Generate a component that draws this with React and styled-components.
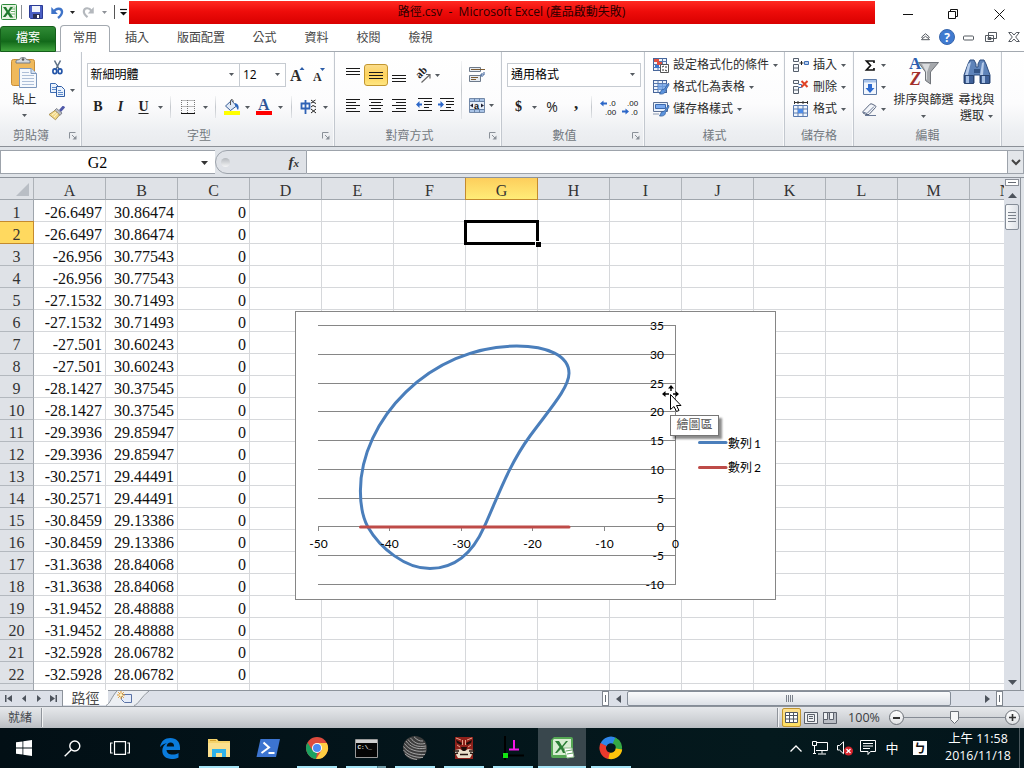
import React from "react";
import styled, { createGlobalStyle, css } from "styled-components";

const ui = `"Open Sans", "Noto Sans CJK TC", sans-serif`;
const serif = `"Liberation Serif", "Noto Sans CJK TC", serif`;

const Global = createGlobalStyle`
  *, *::after { box-sizing: border-box; }
  body { margin: 0; overflow: hidden; background: #fff; }
  svg { display: block; flex: none; overflow: visible; }
`;

const Window = styled.div`
  width: 1024px; height: 768px; overflow: hidden;
  display: flex; flex-direction: column;
  font: 12px/16px ${ui}; color: #2a2a2a; white-space: nowrap;
`;

/* ---------- title bar ---------- */
const TitleBar = styled.header`
  height: 25px; flex: none; display: flex; align-items: flex-start; background: #fff;
`;
const Quick = styled.div`
  width: 129px; height: 24px; flex: none; display: grid; align-items: center;
  grid-template-columns: 18px 6px 24px 19px 11px 20px 13px 6px 12px;
  justify-items: center;
`;
const QuickSep = styled.i`width: 1px; height: 14px; background: ${(p) => p.$c || "#8a8f96"};`;
const TitleText = styled.div`
  width: 746px; height: 23px; margin-top: 1px; flex: none;
  background: linear-gradient(#ff2a22, #ee0c0a 45%, #d90000);
  color: #2c0000; text-align: center; line-height: 22px;
  padding-left: 19px; font-size: 12px; white-space: pre;
`;
const WinButtons = styled.div`
  flex: 1; height: 25px; display: grid; grid-template-columns: 20px 46px 44px 1fr;
  align-items: center; margin-top: 2px;
  & > svg:nth-child(1) { grid-column: 2; margin-left: 8px; }
  & > svg:nth-child(2) { margin-left: 7px; }
  & > svg:nth-child(3) { margin-left: 9px; }
`;

/* ---------- tabs ---------- */
const TabRow = styled.nav`
  height: 27px; flex: none; display: flex; align-items: flex-end;
  border-bottom: 1px solid #a3a9b0; background: #fff;
`;
const FileTab = styled.div`
  width: 56px; height: 26px; border-radius: 3px 3px 0 0; margin-right: 4px; margin-bottom: -1px;
  background: linear-gradient(#2f8a35, #1b7422 45%, #12691a 60%, #3fa33c);
  border: 1px solid #155f1b; color: #fff; text-align: center; line-height: 22px;
`;
const ActiveTab = styled.div`
  width: 50px; height: 27px; margin-bottom: -1px; border: 1px solid #a3a9b0; border-bottom: 0;
  border-radius: 4px 4px 0 0; background: #fff; text-align: center; line-height: 24px; color: #444;
`;
const Tab = styled.div`width: ${(p) => p.$w}px; text-align: center; line-height: 16px; padding-bottom: 5px; color: #444;`;
const TabTools = styled.div`
  margin-left: auto; height: 26px; display: grid; align-items: center; justify-items: center; padding-bottom: 2px;
  grid-template-columns: 12px 32px 11px 34px 11px; padding-right: 5px;
`;

/* ---------- ribbon ---------- */
const Ribbon = styled.section`
  height: 95px; flex: none; display: flex; border-bottom: 1px solid #8b9097;
  background: linear-gradient(#ffffff, #fcfcfd 55%, #edeff2 85%, #e9ebee);
`;
const Group = styled.div`
  width: ${(p) => p.$w}px; height: 94px; flex: none; display: flex; flex-direction: column;
  border-right: 1px solid #c3c8cf; box-shadow: inset -1px 0 #f9fafb;
`;
const GroupBody = styled.div`height: 76px; display: flex; padding-left: ${(p) => p.$pl || 0}px;`;
const GroupFoot = styled.div`
  height: 16px; display: grid; grid-template-columns: 1fr auto 1fr; align-items: center; color: #737980;
  svg { justify-self: end; margin-right: 4px; }
  span { padding-left: ${(p) => p.$dl || 0}px; padding-right: ${(p) => p.$dr || 0}px; }
`;
const Stack = styled.div`display: flex; flex-direction: column; width: ${(p) => (p.$w ? p.$w + "px" : "auto")}; padding-top: ${(p) => p.$pt || 0}px;`;
const Tools = styled.div`
  height: ${(p) => p.$h || 22}px; margin-top: ${(p) => p.$mt || 0}px;
  display: grid; grid-template-columns: ${(p) => p.$cols}; align-items: center; justify-items: center; justify-content: start;
`;
const BigButton = styled.div`
  width: ${(p) => p.$w}px; display: flex; flex-direction: column; align-items: center; padding-top: ${(p) => p.$pt || 5}px;
`;
const Caption = styled.span`line-height: 16px; display: flex; align-items: center; gap: 4px; height: 16px; margin-top: ${(p) => p.$mt || 0}px;`;
const Line = styled.div`
  height: 22px; display: flex; align-items: center;
  svg:first-child { margin-right: 4px; }
  span { margin-right: 4px; }
`;
const Combo = styled.div`
  width: ${(p) => p.$w}px; height: 24px; border: 1px solid #c6cbd1; background: #fff; color: #000;
  display: flex; align-items: center; justify-content: space-between; padding: 0 5px 1px 3px; line-height: 20px;
`;
const Divider = styled.i`width: 1px; height: ${(p) => p.$h || 22}px; background: linear-gradient(#f3f4f5, #c3c7cc 50%, #e3e5e8);`;
const Glyph = styled.b`
  font: bold ${(p) => p.$s || 14}px/18px "Liberation Serif", serif; color: #222; margin-top: ${(p) => p.$mt || 0}px;
  ${(p) => p.$i && css`font-style: italic;`}
  ${(p) => p.$u && css`text-decoration: underline; text-underline-offset: 2px;`}
`;
const PercentGlyph = styled.span`font-size: 14px; color: #222;`;
const Pressed = styled.div`
  width: 24px; height: 22px; border: 1px solid #c2962f; border-radius: 3px;
  background: linear-gradient(#fbdc8a, #fdd25c 50%, #ffe680); display: grid; place-items: center;
`;
const Lift = styled.div`padding-bottom: ${(p) => p.$b || 0}px; padding-top: ${(p) => p.$t || 0}px;`;

/* ---------- formula bar ---------- */
const FormulaBar = styled.section`
  height: 31px; flex: none; padding-top: 3px; background: #dfe3e8; border-bottom: 1px solid #8d939b;
  display: flex; align-items: flex-start;
`;
const NameBox = styled.div`
  width: 215px; height: 24px; border: 1px solid #9da3ab; border-right: 0; background: #fff; color: #000;
  display: grid; grid-template-columns: 193px 1fr; align-items: center; justify-items: center;
  font: 16px/24px ${serif};
`;
const FxBox = styled.div`
  width: 92px; height: 24px; border: 1px solid #9da3ab; border-radius: 12px 0 0 12px; background: #dfe2e7;
  display: flex; align-items: center; justify-content: space-between; padding: 0 7px 0 5px;
  em { font: italic bold 15px/18px "Liberation Serif", serif; color: #333; }
  small { font-size: 11px; }
`;
const Knob = styled.i`width: 9px; height: 9px; border-radius: 50%; background: linear-gradient(#b5b9be, #f4f5f6);`;
const Input = styled.div`flex: 1; height: 24px; border: solid #9da3ab; border-width: 1px 0; background: #fff;`;
const Expand = styled.div`
  width: 17px; height: 24px; border: 1px solid #9da3ab; background: #e3e6ea; display: grid; place-items: center;
`;

/* ---------- sheet ---------- */
const Sheet = styled.main`height: 512px; flex: none; display: flex; position: relative; background: #dfe3e8;`;
const Grid = styled.div`
  width: 1004px; height: 512px; overflow: hidden; display: grid; align-content: start;
  grid-template-columns: 34px repeat(14, 72px); grid-auto-rows: 22px; background: #fff;
  font: 16px/25px ${serif};
`;
const Head = styled.div`
  border-right: 1px solid #adb2b8; border-bottom: 1px solid #9fa5ac; background: #dfe2e7; color: #333;
  text-align: center;
  ${(p) => p.$on && css`background: linear-gradient(#fdce5c, #ffec78); border-color: #c48a2e; box-shadow: -1px 0 #c48a2e;`}
`;
const RowHead = styled(Head)`
  border-bottom-color: #b3b8be; border-right-color: #9fa5ac;
  ${(p) => p.$on && css`background: #ffd95f; border-color: #c48a2e; box-shadow: 0 -1px #c48a2e;`}
`;
const Corner = styled(Head)`display: flex; align-items: flex-end; justify-content: flex-end; padding: 0 4px 3px 0;`;
const Cell = styled.div`
  border-right: 1px solid #d6d8db; border-bottom: 1px solid #d6d8db; text-align: right; padding-right: 3px;
  color: #111; position: relative;
`;
const Selection = styled.div`
  position: absolute; z-index: 1; left: -2px; top: -2px; width: 75px; height: 25px; border: 3px solid #000;
  &::after { content: ""; position: absolute; right: -5px; bottom: -5px; width: 6px; height: 6px; background: #000; border: solid #fff; border-width: 1px 0 0 1px; }
`;
const VScroll = styled.div`
  width: 17px; height: 512px; background: #dce0e7; border-right: 1px solid #8d939b;
  display: flex; flex-direction: column; align-items: center;
`;
const SplitBox = styled.div`
  width: 14px; height: 7px; margin-top: 1px; border: 1px solid #8a8f98; background: #fff; display: grid; place-items: center;
  i { width: 8px; height: 1px; background: #666c75; }
`;
const Arrow = styled.div`
  height: ${(p) => p.$h}px; width: ${(p) => (p.$w ? p.$w + "px" : "auto")}; padding-left: ${(p) => p.$pl || 0}px;
  display: grid; place-items: center; ${(p) => p.$end && css`margin-top: auto;`}
`;
const VThumb = styled.div`
  width: 14px; height: 26px; border: 1px solid #858d98; border-radius: 2px; background: linear-gradient(90deg, #fafbfc, #dde1e7);
  display: grid; place-content: center; gap: 2px;
  i { width: 8px; height: 1px; background: #7a818b; }
`;
const ChartFrame = styled.div`
  position: absolute; left: 295px; top: 133px; width: 481px; height: 289px; background: #fff; border: 1px solid #868686;
`;
const Tip = styled.div`
  position: absolute; left: 670px; top: 237px; width: 49px; height: 21px; border: 1px solid #767676; background: #fff;
  box-shadow: 3px 3px 2px rgba(0,0,0,.45); color: #575757; text-align: center; line-height: 18px;
`;
const Pointer = styled.div`position: absolute; left: 662px; top: 207px;`;

/* ---------- sheet tabs ---------- */
const SheetTabs = styled.section`
  height: 17px; flex: none; display: flex; background: #dce0e8; border-top: 1px solid #8d939b; border-bottom: 1px solid #8d939b;
  & > svg { margin-left: -4px; }
`;
const NavButtons = styled.div`
  width: 63px; display: grid; grid-template-columns: repeat(4, 15px); align-items: center; justify-items: center;
  padding-left: 1px; border-right: 1px solid #8d939b;
`;
const SheetName = styled.div`width: 45px; height: 15px; margin-top: -1px; background: #fff; text-align: center; font-size: 14px; line-height: 15px; color: #4a4a4a;`;
const HBar = styled.div`margin-left: auto; width: 422px; height: 15px; display: flex; align-items: center;`;
const SplitV = styled.div`width: 7px; height: 15px; border: 1px solid #80868f; background: #fff; display: grid; place-items: center; i { width: 1px; height: 7px; background: #666c75; }`;
const HThumb = styled.div`
  width: 324px; height: 15px; border: 1px solid #858d98; border-radius: 2px; background: linear-gradient(#fafbfc, #dde1e7);
  display: flex; justify-content: center; align-items: center; gap: 1px;
  i { width: 1px; height: 7px; background: #7a818b; }
`;

/* ---------- status bar ---------- */
const Status = styled.footer`
  height: 21px; flex: none; display: flex; align-items: center; padding: 0 4px 0 8px; color: #43474c;
  background: linear-gradient(#e6e8eb, #cfd2d6 60%, #b9bdc2);
`;
const StatusSep = styled.i`
  width: 2px; height: 19px; background: linear-gradient(90deg, #8f949b 50%, #f2f3f4 50%); margin-left: 9px;
  ${(p) => p.$push && css`margin-left: auto; margin-right: 3px;`}
`;
const View = styled.div`
  width: 19px; height: 19px; display: grid; place-items: center; border-radius: 2px;
  ${(p) => p.$on && css`border: 1px solid #c2962f; background: linear-gradient(#fddf8f, #ffe05f);`}
`;
const Percent = styled.span`width: 50px; text-align: center; font-size: 12.5px; color: #3a3d42;`;
const Zoom = styled.div`width: 131px; display: flex; align-items: center;`;
const Round = styled.div`width: 15px; height: 15px; border: 1px solid #6a6f76; border-radius: 50%; background: linear-gradient(#fff, #dfe1e4); display: grid; place-items: center; flex: none;`;
const Track = styled.div`flex: 1; height: 1px; background: #858b94; display: flex; justify-content: center; align-items: center;`;

/* ---------- taskbar ---------- */
const Taskbar = styled.footer`height: 40px; flex: none; display: flex; background: linear-gradient(90deg, #020f15, #03141a 35%, #04191d 75%, #03151b); color: #fff;`;
const Task = styled.div`
  width: 48px; height: 40px; margin-right: ${(p) => p.$mr || 0}px; display: grid; place-items: center; position: relative;
  ${(p) => p.$active && css`background: #39474d;`}
  ${(p) => (p.$run || p.$active) && css`
    &::after { content: ""; position: absolute; bottom: 0; height: 2px; left: ${p.$active ? 0 : 4}px; right: ${p.$active ? 0 : 4}px;
      background: ${p.$multi ? "linear-gradient(90deg, #a5e4f6 31px, #4c7f8c 31px, #4c7f8c 32px, #6f9ba7 32px)" : "#a5e4f6"}; }`}
`;
const Tray = styled.div`
  margin-left: auto; width: 234px; display: grid; align-items: center; justify-items: center;
  grid-template-columns: 12px 36px 14px 32px 16px 40px 76px 1fr;
`;
const Clock = styled.div`text-align: center; font-size: 12.4px; line-height: 17px; height: 36px; span { display: block; }`;
const Edge = styled.i`width: 1px; height: 40px; background: #4b585e; justify-self: end; margin-right: 4px;`;
const Han = styled.span`font-size: 13px; line-height: 18px;`;
const Ime = styled.span`width: 14px; height: 14px; background: #fff; color: #111; font: bold 12px/13px "Noto Sans CJK TC", sans-serif; text-align: center;`;

/* ---------- drawings ---------- */
const Down = ({ c = "#555a60", w = 5 }) => (
  <svg width={w} height={(w + 1) / 2} viewBox={`0 0 ${w} ${(w + 1) / 2}`}><path d={`M0 0H${w}L${w / 2} ${(w + 1) / 2}z`} fill={c} /></svg>
);
const Launcher = () => (
  <svg width="8" height="8" viewBox="0 0 8 8" fill="none" stroke="#8a9098"><path d="M.5 6.500V.5H6.500M3 3l3 3" /><path d="M7.500 3.500v4h-4z" fill="#8a9098" stroke="none" /></svg>
);
const ExcelLogo = () => (
  <svg width="16" height="16" viewBox="0 0 16 16">
    <rect x=".5" y=".5" width="15" height="15" rx="1" fill="#e8f4e3" stroke="#2d8a3c" />
    <path d="M9 3h5v10H9z" fill="#fff" stroke="#8fc48f" strokeWidth=".6" />
    <path d="M10 5h4M10 7.500h4M10 10h4" stroke="#6bb26b" />
    <path d="M2 3h3l2 3.500L9.500 3H12L8.300 8l4 5.500H9L6.800 10 4.500 13H1.800L5.500 8z" fill="#1f7a2e" />
  </svg>
);
const Save = () => (
  <svg width="14" height="14" viewBox="0 0 14 14"><path d="M.5.5h13v13h-12l-1-1z" fill="#4a5fc4" stroke="#2b3b95" /><path d="M3 1h8v6H3z" fill="#f2f5fb" /><path d="M4 9h7v4.500H4z" fill="#2b3156" /><path d="M8 10h2v3H8z" fill="#fff" /></svg>
);
const Undo = () => (
  <svg width="13" height="13" viewBox="0 0 13 13" fill="none"><path d="M3 5.500C5 2 10.500 1.500 11 5.500 11.300 8 9.500 10 7 12" stroke="#3e73c8" strokeWidth="2.400" /><path d="M.3 1v7h6.500z" fill="#3e73c8" /></svg>
);
const Redo = () => (
  <svg width="12" height="12" viewBox="0 0 13 13" fill="none"><path d="M10 5C8 1.500 2.500 1.500 2 5.500 1.800 8 3.500 10 6 12" stroke="#b4b8bd" strokeWidth="2.400" /><path d="M12.700 1v7H6.200z" fill="#b4b8bd" /></svg>
);
const Paste = () => (
  <svg width="27" height="31" viewBox="0 0 27 31">
    <rect x=".5" y="2.500" width="23" height="26" rx="2" fill="#efb95c" stroke="#c98e36" />
    <path d="M5 6V4c0-1 2-1 3.500-1.500C9 0 15 0 15.500 2.500 17 3 19 3 19 4v2z" fill="#d5d9de" stroke="#767c84" /><circle cx="12" cy="2.500" r="1.200" fill="#555" />
    <path d="M8.500 11.500H20l5.500 5V30.500h-17z" fill="#f6f9fd" stroke="#7e98bd" /><path d="M20 11.500v5h5.500" fill="#d3e0f1" stroke="#7e98bd" />
    <path d="M11 15.500h7M11 18.500h12M11 21.500h12M11 24.500h12M11 27.500h12" stroke="#aebfd8" />
  </svg>
);
const Scissors = () => (
  <svg width="11" height="15" viewBox="0 0 11 15" fill="none"><path d="M2.500.5L7 9M8.500.5L4 9" stroke="#5e7187" strokeWidth="1.600" /><ellipse cx="2.800" cy="11.200" rx="1.900" ry="2.400" stroke="#2455a8" strokeWidth="1.700" /><ellipse cx="8" cy="11.200" rx="1.900" ry="2.400" stroke="#2455a8" strokeWidth="1.700" /></svg>
);
const Copy = () => (
  <svg width="15" height="14" viewBox="0 0 15 14"><path d="M.5.500h5l2.500 2.500v6.500H.5z" fill="#eaf2fc" stroke="#3e6db2" /><path d="M2 4.500h4M2 6.500h4" stroke="#5f8ccc" /><path d="M6.500 3.500h5l3 3v7h-8z" fill="#eaf2fc" stroke="#2f5ca5" /><path d="M8 7.500h3M8 9.500h5M8 11.500h5" stroke="#5f8ccc" /></svg>
);
const Brush = () => (
  <svg width="16" height="14" viewBox="0 0 16 14"><path d="M10 4l3.500-4q2-.5 2.500 1.500L12 6z" fill="#4f58a8" /><path d="M7.500 2.500l5.500 4.500-2 2.500-5.500-5z" fill="#b9bcc6" stroke="#5f636d" strokeWidth=".7" /><path d="M6 4.500L0 8.500 6.500 13.800 10.500 9z" fill="#f3d988" stroke="#a08545" strokeWidth=".8" /><path d="M3 9l4-3M5 11l3.500-4" stroke="#fff5cf" /></svg>
);
const FontStep = ({ up }) => (
  <svg width={up ? 14 : 12} height="16" viewBox={`0 0 ${up ? 14 : 12} 16`}>
    <text x="0" y="14" fontFamily="Liberation Serif" fontWeight="bold" fontSize={up ? 16 : 12} fill="#2c2c2c">A</text>
    <path d={up ? "M9.500 3h5L12 0z" : "M7 1h5L9.500 4z"} fill="#2c5da8" />
  </svg>
);
const Borders = () => (
  <svg width="14" height="14" viewBox="0 0 14 14"><path d="M.5.5h13M.5 6.500h13M.5 0v13M6.500 0v13M13.500 0v13" fill="none" stroke="#777" strokeDasharray="1 1" /><path d="M0 13.500h14" stroke="#111" /></svg>
);
const Bucket = () => (
  <svg width="16" height="16" viewBox="0 0 16 16"><path d="M1.500 7L7.500 1.500l5 5.500-6 4.500z" fill="#dfe9f7" stroke="#3a5f97" /><path d="M6.500 6V1.500C7.500-.5 9.500.5 9 3" fill="none" stroke="#555" /><path d="M11 4c3.500 1 4.500 4 3 7-1.500-1-1-3.500-3-4.500z" fill="#2b66bd" /><path d="M0 12h16v4H0z" fill="#ffff00" /></svg>
);
const FontColor = () => (
  <svg width="16" height="16" viewBox="0 0 16 16"><text x="2" y="11" fontFamily="Liberation Serif" fontWeight="bold" fontSize="16" fill="#2f5597">A</text><path d="M0 12h16v4H0z" fill="#ff0000" /></svg>
);
const Phonetic = () => (
  <svg width="17" height="16" viewBox="0 0 17 16"><path d="M1.500 4.500h8v5h-8zM5.500 1v14" fill="none" stroke="#2f62b5" strokeWidth="1.800" /><path d="M11 1l2 1.500L15.500 1M11 4l2-1 3 1.500M11 8l2-1.500L16 8M11 10l5 4M16 10l-5 4" fill="none" stroke="#222" /></svg>
);
const Bars = ({ kind = "left" }) => (
  <svg width="14" height="13" viewBox="0 0 14 13" stroke="#1a1a1a">
    {[0, 1, 2, 3, 4].map((i) => {
      const short = i % 2 === 1;
      const a = !short || kind === "left" ? 0 : kind === "right" ? 4 : 2;
      const b = !short || kind === "right" ? 14 : kind === "left" ? 10 : 12;
      return <path key={i} d={`M${a} ${0.5 + i * 3}H${b}`} />;
    })}
  </svg>
);
const ThreeBars = () => (
  <svg width="14" height="7" viewBox="0 0 14 7" stroke="#1a1a1a"><path d="M0 .5h14M0 3.500h14M0 6.500h14" /></svg>
);
const Rotate = () => (
  <svg width="16" height="15" viewBox="0 0 16 15"><text x="0" y="0" fontFamily="Liberation Serif" fontWeight="bold" fontSize="11" transform="translate(4.500 11) rotate(-45)" fill="#222">ab</text><path d="M6.500 14.500L14.500 7M11 6.500h4v4" fill="none" stroke="#666" strokeWidth="1.200" /></svg>
);
const Indent = ({ out }) => (
  <svg width="16" height="14" viewBox="0 0 16 14"><path d="M2 .5h14M2 12.500h14M8 3.500h8M8 9.500h5M8 6.500h8" stroke="#1a1a1a" strokeWidth="1.200" /><path d={out ? "M0 6.500L3.500 3v2.500H6v2H3.500V10z" : "M6 6.500L2.500 3v2.500H0v2h2.500V10z"} fill="#2b66c8" /></svg>
);
const Wrap = () => (
  <svg width="16" height="16" viewBox="0 0 16 16"><path d="M.5.5h11v4H.5zM.5 8.500h11v6H.5z" fill="#e6ebf1" stroke="#6d7a8b" /><path d="M2 2.500h14M2 10.500h7M2 12.500h5" stroke="#7b5b33" /><path d="M15 5v3h-3M13.500 6l-2 2 2 2" fill="none" stroke="#345a95" /></svg>
);
const Merge = () => (
  <svg width="16" height="15" viewBox="0 0 16 15"><path d="M.5.5h15v14H.5z" fill="#a9c3e6" stroke="#7389a8" /><path d="M0 3.500h16M0 11.500h16M5.500 0v4M10.500 0v4M5.500 11v4M10.500 11v4" stroke="#6a84a8" /><path d="M1 4h14v7H1z" fill="#e8f0fa" /><text x="5" y="10.500" fontFamily="Liberation Sans" fontWeight="bold" fontSize="9" fill="#111">a</text><path d="M4 5.500v4L1 7.500zM12 5.500v4l3-2z" fill="#223" /></svg>
);
const Decimal = ({ more }) => (
  <svg width="17" height="15" viewBox="0 0 17 15" fontFamily="Liberation Sans" fontSize="8">
    <text x={more ? 9 : 5} y="6" fill="#111">{more ? ".0" : ".00"}</text><text x={more ? 5 : 9} y="14.500" fill="#111">{more ? ".00" : ".0"}</text>
    <path d={more ? "M0 3.500L3.500.5v2H7v2H3.500v2z" : "M7 11.500L3.500 8.500v2H0v2h3.500v2z"} fill="#2b66c8" />
  </svg>
);
const Table = ({ children }) => (
  <svg width="16" height="16" viewBox="0 0 16 16"><rect x=".5" y="1.500" width="13" height="12" fill="#eef4fc" stroke="#46659a" /><path d="M.5 4.500h13M.5 7.500h13M.5 10.500h13M5 1.500v12M9.500 1.500v12" stroke="#5778ae" />{children}</svg>
);
const brushMark = <path d="M15.500 4l-4 6-3 1-2 4c4 .5 6-1 6-3.500L16 6z" fill="#5b93dd" stroke="#2b5797" strokeWidth=".7" />;
const Conditional = () => <Table><path d="M1 2h5v3H1zM4 5h5v3H4z" fill="#e2503f" /><path d="M2 8h4v3H2z" fill="#3d78cc" /><path d="M7.500 7.500h8v8h-8z" fill="#fff" stroke="#555" /><path d="M9 10l2-1M9 13h2M12 10h2M12 13l2 1" stroke="#333" /></Table>;
const TableFmt = () => <Table><path d="M5 5h9v6H5z" fill="#6ea0e3" opacity=".8" />{brushMark}</Table>;
const CellStyle = () => (
  <svg width="16" height="16" viewBox="0 0 16 16"><path d="M.5 1.500h14v9H.5z" fill="#e8f0fb" stroke="#5d7196" /><path d="M2.500 3.500h10v4h-10z" fill="#7aaaf0" stroke="#3d69ad" /><path d="M0 13h6" stroke="#8b9ab2" />{brushMark}</svg>
);
const InsertCell = ({ del }) => (
  <svg width="16" height="15" viewBox="0 0 16 15" fill="#f5f8fc" stroke="#555e6b"><path d="M.5.5h5v3h-5zM.5 6.500h5v7h-5zM.5 10h5" />{del ? <><path d="M5.500 4.500h3v3h-3" stroke="#3f6fb5" /><path d="M8.500 1l6 6M14.500 1l-6 6" stroke="#e04326" strokeWidth="2" /></> : <><path d="M11.500 3.500h4v3h-4z" fill="#b9d0f0" stroke="#3f6fb5" /><path d="M6.500 5h4M8.500 3v4" stroke="#222" /></>}</svg>
);
const FormatCell = () => (
  <svg width="16" height="16" viewBox="0 0 16 16"><path d="M1 1.500h14M1.500 0v3M14.500 0v3M5 0v3M10 0v3" stroke="#333" /><path d="M.5 4.500h14v11H.5z" fill="#eef4fc" stroke="#5778ae" /><path d="M.5 8h14M.5 12h14M5 4.500v11M10 4.500v11" stroke="#5778ae" /><path d="M5 8h5v4H5z" fill="#4c8be8" /></svg>
);
const Sigma = () => <svg width="10" height="11" viewBox="0 0 10 11"><path d="M9 3V1H1.500L5.500 5.500 1.500 10H9V8" fill="none" stroke="#111" strokeWidth="1.700" /></svg>;
const Fill = () => <svg width="14" height="16" viewBox="0 0 14 16"><path d="M.5.5h13v15H.5z" fill="#f1f6fd" stroke="#5d7ba8" /><path d="M1 1h12v2.500H1z" fill="#a9c4ea" /><path d="M5 5h4v4h2.500L7 14 2.500 9H5z" fill="#2d6bd0" /></svg>;
const Eraser = () => <svg width="15" height="13" viewBox="0 0 15 13"><path d="M1 8.500L8 1.200Q9 .5 10 1l3.500 1.800q.8.700 0 1.700L7 11.500H4L1 10z" fill="#f4f6fa" stroke="#5a6780" /><path d="M1 9l4 1.500L12 3.500M3 12.500h11" fill="none" stroke="#6b7a97" /></svg>;
const Sort = () => (
  <svg width="30" height="30" viewBox="0 0 30 30"><path d="M9.500 5.500h20L21.500 15v12l-5-3.500V15z" fill="#a5a8ac" stroke="#70747a" /><path d="M13 7h8l-3 8v8l-1-1v-7.500z" fill="#d9dbdd" /><text x="0" y="12" fontFamily="Liberation Serif" fontWeight="bold" fontSize="17" fill="#2d5fb0">A</text><text x="1" y="27.500" fontFamily="Liberation Serif" fontWeight="bold" fontStyle="italic" fontSize="18" fill="#a3302c">Z</text></svg>
);
const Binoculars = () => (
  <svg width="28" height="26" viewBox="0 0 28 26"><path d="M5 5l2-4h4l2 4v3h2V5l2-4h4l2 4 4 11v8H17v-8H11v8H1v-8z" fill="#5e83b9" stroke="#2f4e80" /><path d="M5 5l-3 11h3l3-13zM19 4l-2 12h3l1-13z" fill="#b6cbea" /><path d="M1.500 16.500h9v8h-9zM17.500 16.500h9v8h-9z" fill="#3e6099" stroke="#2a446f" /><path d="M3 17h3v7H3zM19 17h3v7h-3z" fill="#a3bde2" /><path d="M11 10h6v4h-6z" fill="#345587" /></svg>
);
const Tri = ({ d, w = 5, h = 8, f = "#4d535c" }) => <svg width={w} height={h} viewBox={`0 0 ${w} ${h}`}><path d={d} fill={f} /></svg>;

/* ---------- chart ---------- */
const loop = "M516.7 346C548 346 569 356 569 373.300C569 388 549 410 530 436C508 466 497 499 484.300 526.700C474 550 457 568.600 430 568.600C405 568.600 380 548 367.700 526.700C362 516 360.400 505 360.400 491C360.400 420 430 346 516.7 346z";
const yTicks = [[35, 325], [30, 354], [25, 383], [20, 411], [15, 440], [10, 469], [5, 498], [0, 526], [-5, 555], [-10, 584]];
const xTicks = [[-50, 318], [-40, 389], [-30, 461], [-20, 532], [-10, 604], [0, 675]];
const Chart = () => (
  <svg width="479" height="287" viewBox="296 312 479 287" fontFamily="Lato" fontSize="12" fill="#000">
    {yTicks.map(([v, y]) => <path key={v} d={`M318 ${y + 0.5}H676`} stroke="#868686" />)}
    <path d="M675.500 325V585" stroke="#868686" />
    {xTicks.map(([v, x]) => <path key={v} d={`M${x + 0.5} 526v5`} stroke="#868686" />)}
    <path d={loop} fill="none" stroke="#4a7ebb" strokeWidth="3" />
    <path d="M360.500 527H569" stroke="#be4b48" strokeWidth="3" strokeLinecap="round" />
    {yTicks.map(([v, y]) => <text key={v} x="664" y={y + 5} textAnchor="end">{v}</text>)}
    {xTicks.map(([v, x]) => <text key={v} x={x + 0.5} y="548" textAnchor="middle">{v}</text>)}
    <path d="M699.500 442.500H726" stroke="#4a7ebb" strokeWidth="3" strokeLinecap="round" />
    <path d="M699.500 467.500H726" stroke="#be4b48" strokeWidth="3" strokeLinecap="round" />
    <text x="728" y="447.500" fontFamily="Lato, 'Noto Sans CJK TC'">數列<tspan dx="2">1</tspan></text>
    <text x="728" y="471.500" fontFamily="Lato, 'Noto Sans CJK TC'">數列<tspan dx="2">2</tspan></text>
  </svg>
);

const colA = ["-26.6497", "-26.6497", "-26.956", "-26.956", "-27.1532", "-27.1532", "-27.501", "-27.501", "-28.1427", "-28.1427", "-29.3936", "-29.3936", "-30.2571", "-30.2571", "-30.8459", "-30.8459", "-31.3638", "-31.3638", "-31.9452", "-31.9452", "-32.5928", "-32.5928", ""];
const colB = ["30.86474", "30.77543", "30.71493", "30.60243", "30.37545", "29.85947", "29.44491", "29.13386", "28.84068", "28.48888", "28.06782"];
const letters = "ABCDEFGHIJKLMN".split("");

const TitleArea = () => (
  <TitleBar>
    <Quick>
      <ExcelLogo /><QuickSep /><Save /><Undo /><Down c="#222" /><Redo /><Down c="#8d9197" /><QuickSep $c="#555" />
      <svg width="7" height="7" viewBox="0 0 7 7"><path d="M0 .5h7" stroke="#111" strokeWidth="1.200" /><path d="M0 3h7L3.500 6.500z" fill="#111" /></svg>
    </Quick>
    <TitleText>{"路徑.csv  -  Microsoft Excel (產品啟動失敗)"}</TitleText>
    <WinButtons>
      <svg width="10" height="11" viewBox="0 0 10 11"><path d="M0 5.500h10" stroke="#111" /></svg>
      <svg width="11" height="11" viewBox="0 0 11 11" fill="none" stroke="#111"><path d="M.5 2.500h7v7h-7zM2.500 2.500v-2h7v7h-2" /></svg>
      <svg width="11" height="11" viewBox="0 0 11 11"><path d="M.5.5l10 10M10.500.5l-10 10" stroke="#111" /></svg>
    </WinButtons>
  </TitleBar>
);

const TabArea = () => (
  <TabRow>
    <FileTab>檔案</FileTab><ActiveTab>常用</ActiveTab>
    <Tab $w={54}>插入</Tab><Tab $w={74}>版面配置</Tab><Tab $w={53}>公式</Tab><Tab $w={51}>資料</Tab><Tab $w={53}>校閱</Tab><Tab $w={51}>檢視</Tab>
    <TabTools>
      <svg width="9" height="8" viewBox="0 0 9 8" fill="#fff" stroke="#555a61"><path d="M.7 4L4.500.7 8.300 4 7.500 5.500l1 1.200H.5l1-1.200zM1.500 5.500l3-2.200 3 2.200" /></svg>
      <svg width="16" height="16" viewBox="0 0 16 16"><circle cx="8" cy="8" r="7.500" fill="#3f7ad0" stroke="#3a67ac" /><text x="8" y="12.500" textAnchor="middle" fontFamily="Open Sans" fontWeight="bold" fontSize="12" fill="#fff">?</text></svg>
      <svg width="11" height="3" viewBox="0 0 11 3"><rect x=".5" y="0" width="10" height="4" rx="1" fill="#fff" stroke="#555a61" /></svg>
      <svg width="12" height="11" viewBox="0 0 12 11" fill="#fff" stroke="#555a61"><path d="M3.500.5h8v6h-8zM.5 3.500h8v6h-8zM3 5.500h3v2H3z" /></svg>
      <svg width="12" height="10" viewBox="0 0 12 10" fill="#fff" stroke="#555a61"><path d="M.7.5h3L6 3 8.300.5h3L7.700 5l3.600 4.500h-3L6 7 3.700 9.500h-3L4.300 5z" /></svg>
    </TabTools>
  </TabRow>
);

const RibbonArea = () => (
  <Ribbon>
    <Group $w={82}>
      <GroupBody>
        <BigButton $w={49}><Paste /><Caption $mt={4}>貼上</Caption><Arrow $h={14}><Down /></Arrow></BigButton>
        <Stack $w={32}>
          <Tools $mt={4} $cols="16px 14px"><Scissors /></Tools>
          <Tools $mt={1} $cols="16px 14px"><Copy /><Down /></Tools>
          <Tools $mt={1} $cols="16px 14px"><Brush /></Tools>
        </Stack>
      </GroupBody>
      <GroupFoot $dr={19}><i /><span>剪貼簿</span><Launcher /></GroupFoot>
    </Group>
    <Group $w={253}>
      <GroupBody $pl={5}>
        <Stack>
          <Tools $mt={11} $h={24} $cols="152px 47px 22px 22px">
            <Combo $w={153}>新細明體<Down /></Combo><Combo $w={47}>12<Down /></Combo><FontStep up /><FontStep />
          </Tools>
          <Tools $mt={9} $cols="22px 23px 23px 10px 11px 24px 10px 10px 24px 7px 26px 7px 14px 20px 14px">
            <Glyph>B</Glyph><Glyph $i>I</Glyph><Glyph $u>U</Glyph><Down /><Divider /><Borders /><Down /><Divider /><Bucket /><Down /><FontColor /><Down /><Divider /><Phonetic /><Down />
          </Tools>
        </Stack>
      </GroupBody>
      <GroupFoot $dr={18}><i /><span>字型</span><Launcher /></GroupFoot>
    </Group>
    <Group $w={167}>
      <GroupBody $pl={6}>
        <Stack>
          <Tools $mt={12} $cols="23px 23px 23px 26px 2px">
            <Lift $b={7}><ThreeBars /></Lift><Pressed><ThreeBars /></Pressed><Lift $t={6}><ThreeBars /></Lift><Rotate /><Down />
          </Tools>
          <Tools $mt={8} $cols="23px 23px 23px 28px 16px">
            <Bars /><Bars kind="center" /><Bars kind="right" /><Indent out /><Indent />
          </Tools>
        </Stack>
        <Tools $h={75} $cols="14px"><Divider $h={58} /></Tools>
        <Stack>
          <Tools $mt={12} $cols="18px 10px"><Wrap /></Tools>
          <Tools $mt={8} $cols="18px 10px"><Merge /><Down /></Tools>
        </Stack>
      </GroupBody>
      <GroupFoot $dr={17}><i /><span>對齊方式</span><Launcher /></GroupFoot>
    </Group>
    <Group $w={143}>
      <GroupBody $pl={5}>
        <Stack>
          <Tools $mt={11} $h={24} $cols="134px"><Combo $w={134}>通用格式<Down /></Combo></Tools>
          <Tools $mt={9} $cols="23px 9px 26px 22px 8px 26px 18px">
            <Glyph>$</Glyph><Down /><PercentGlyph>%</PercentGlyph><Glyph $s={17} $mt={-6}>,</Glyph><Divider /><Decimal more /><Decimal />
          </Tools>
        </Stack>
      </GroupBody>
      <GroupFoot $dr={17}><i /><span>數值</span><Launcher /></GroupFoot>
    </Group>
    <Group $w={140}>
      <GroupBody $pl={8}>
        <Stack $pt={2}>
          <Line><Conditional /><span>設定格式化的條件</span><Down /></Line>
          <Line><TableFmt /><span>格式化為表格</span><Down /></Line>
          <Line><CellStyle /><span>儲存格樣式</span><Down /></Line>
        </Stack>
      </GroupBody>
      <GroupFoot><i /><span>樣式</span><i /></GroupFoot>
    </Group>
    <Group $w={69}>
      <GroupBody $pl={8}>
        <Stack $pt={2}>
          <Line><InsertCell /><span>插入</span><Down /></Line>
          <Line><InsertCell del /><span>刪除</span><Down /></Line>
          <Line><FormatCell /><span>格式</span><Down /></Line>
        </Stack>
      </GroupBody>
      <GroupFoot><i /><span>儲存格</span><i /></GroupFoot>
    </Group>
    <Group $w={148}>
      <GroupBody $pl={8}>
        <Stack $w={30} $pt={2}>
          <Tools $cols="15px 12px"><Sigma /><Down /></Tools>
          <Tools $cols="15px 12px"><Fill /><Down /></Tools>
          <Tools $cols="15px 12px"><Eraser /><Down /></Tools>
        </Stack>
        <BigButton $w={63}><Sort /><Caption $mt={5}>排序與篩選</Caption><Arrow $h={16}><Down /></Arrow></BigButton>
        <BigButton $w={43} $pt={7}><Binoculars /><Caption $mt={7}>尋找與</Caption><Caption>選取<Down /></Caption></BigButton>
      </GroupBody>
      <GroupFoot><i /><span>編輯</span><i /></GroupFoot>
    </Group>
  </Ribbon>
);

const SheetArea = () => (
  <Sheet>
    <Grid>
      <Corner><svg width="13" height="13" viewBox="0 0 13 13"><path d="M13 0v13H0z" fill="#b9bec5" /></svg></Corner>
      {letters.map((l) => <Head key={l} $on={l === "G"}>{l}</Head>)}
      {colA.map((a, r) => (
        <React.Fragment key={r}>
          <RowHead $on={r === 1}>{a && r + 1}</RowHead>
          {letters.map((l, c) => (
            <Cell key={l}>
              {a && (c === 0 ? a : c === 1 ? colB[r >> 1] : c === 2 ? "0" : null)}
              {r === 1 && l === "G" && <Selection />}
            </Cell>
          ))}
        </React.Fragment>
      ))}
    </Grid>
    <VScroll>
      <SplitBox><i /></SplitBox>
      <Arrow $h={18}><Tri w={9} h={5} d="M0 5h9L4.500 0z" /></Arrow>
      <VThumb><i /><i /><i /><i /></VThumb>
      <Arrow $h={16} $end><Tri w={9} h={5} d="M0 0h9L4.500 5z" /></Arrow>
    </VScroll>
    <ChartFrame><Chart /></ChartFrame>
    <Tip>繪圖區</Tip>
    <Pointer>
      <svg width="18" height="28" viewBox="0 0 18 28">
        <path d="M9 1v16M1 9h16" stroke="#fff" strokeWidth="3" /><path d="M9 2v4M2 9h5M11 9h5" stroke="#000" strokeWidth="1.400" />
        <path d="M9 0l3 3.500H6zM0 9l3.500-3v6zM17 9l-3.500-3v6z" fill="#000" />
        <path d="M8.500 9.500v15l3.500-3 2.500 5 2.500-1-2.500-5h4.500z" fill="#fff" stroke="#000" />
      </svg>
    </Pointer>
  </Sheet>
);

const BottomArea = () => (
  <>
    <SheetTabs>
      <NavButtons>
        <Tri w={7} h={7} d="M0 0h1.500v7H0zM7 0v7L2 3.500z" /><Tri w={4} h={7} d="M4 0v7L0 3.500z" /><Tri w={4} h={7} d="M0 0v7l4-3.500z" /><Tri w={7} h={7} d="M5.500 0H7v7H5.500zM0 0v7l5-3.500z" />
      </NavButtons>
      <SheetName>路徑</SheetName>
      <svg width="44" height="15" viewBox="0 0 44 15">
        <path d="M2 14.500C6 13 8 5 13 0H45L34 12.500Q32 14.500 30 14.500z" fill="#eceff3" /><path d="M2 14.500C6 13 8 5 13 0M30 14.500C34 14 37 6 45 0" fill="none" stroke="#8d939b" />
        <path d="M17.500 3.500h10v8h-7l-3-3z" fill="#e5ecf8" stroke="#5a72a6" /><path d="M17 0v8M13 4h8M14.200 1.200l5.600 5.600M19.800 1.200l-5.600 5.600" stroke="#e39a2c" /><circle cx="17" cy="4" r="1.500" fill="#fff3c0" />
      </svg>
      <HBar>
        <SplitV><i /></SplitV><Arrow $h={15} $w={18}><Tri w={5} h={8} d="M5 0v8L0 4z" /></Arrow>
        <HThumb><i /><i /><i /><i /></HThumb>
        <Arrow $h={15} $w={45} $pl={28}><Tri w={5} h={8} d="M0 0v8l5-4z" /></Arrow><SplitV><i /></SplitV>
      </HBar>
    </SheetTabs>
    <Status>
      <span>就緒</span><StatusSep />
      <StatusSep $push />
      <View $on><svg width="13" height="11" viewBox="0 0 13 11"><path d="M.5.5h12v10H.5zM.5 3.500h12M.5 7h12M4.500.5v10M8.500.5v10" fill="#fff" stroke="#4f5560" /></svg></View>
      <View><svg width="14" height="12" viewBox="0 0 14 12" fill="#eef0f2" stroke="#5b616b"><path d="M.5.5h13v11H.5zM3.500 2.500h7v7h-7zM5 4.500h4M5 6.500h4" /></svg></View>
      <View><svg width="14" height="12" viewBox="0 0 14 12" fill="#eef0f2" stroke="#5b616b"><path d="M.5.5h13v11H.5z" fill="#b9bdc4" /><path d="M.5.5h4v7h-4zM6.500.5h4v7h-4z" /></svg></View>
      <Percent>100%</Percent>
      <Zoom>
        <Round><svg width="7" height="2"><path d="M0 1h7" stroke="#333" strokeWidth="2" /></svg></Round>
        <Track><svg width="9" height="13" viewBox="0 0 9 13"><path d="M.5.5h8v8l-4 4-4-4z" fill="#f6f7f8" stroke="#6a6f76" /></svg></Track>
        <Round><svg width="7" height="7"><path d="M0 3.500h7M3.500 0v7" stroke="#333" strokeWidth="1.600" /></svg></Round>
      </Zoom>
    </Status>
  </>
);

const TaskArea = () => (
  <Taskbar>
    <Task><svg width="16" height="16" viewBox="0 0 16 16" fill="#fff"><path d="M0 2.300L6.500 1.400V7.600H0zM7.300 1.300L16 0v7.600H7.300zM0 8.400h6.500v6.200L0 13.700zM7.300 8.400H16V16l-8.700-1.300z" /></svg></Task>
    <Task><svg width="17" height="17" viewBox="0 0 17 17" fill="none" stroke="#fff" strokeWidth="1.400"><circle cx="10.800" cy="6" r="5" /><path d="M7.300 9.700L.7 16.300" /></svg></Task>
    <Task $mr={2}><svg width="20" height="14" viewBox="0 0 20 14" fill="none" stroke="#fff" strokeWidth="1.200"><path d="M4.500.6h11v12.800h-11zM2.700 2H.6v10h2.100M17.300 2h2.100v10h-2.100" /></svg></Task>
    <Task $mr={1}><svg width="20" height="21" viewBox="0 0 20 21"><path d="M0 9.200C1 3 5 0 10.300 0 16.500 0 20 4 20 9.500V12H6.500c.2 3 2.800 4.600 6 4.600 2.300 0 4.300-.6 6-1.700v4.600C16.500 20.500 14 21 11.500 21 6 21 2.300 17.800 2.300 12.800c0-3.300 1.700-6 4.500-7.500C4 5.700 1.500 7 0 9.200zM6.600 8.500h7.500c0-2.700-1.300-4-3.500-4-2.100 0-3.600 1.400-4 4z" fill="#0a7bdc" /></svg></Task>
    <Task $mr={1} $run><svg width="22" height="18" viewBox="0 0 22 18"><path d="M0 0h9l1.500 2H22v16H0z" fill="#f5d36b" /><path d="M0 4h22v14H0z" fill="#fbe08e" /><path d="M4 18v-8h14v8h-4v-4H8v4z" fill="#2fb2ea" /><path d="M2 1.500h6" stroke="#d3a02f" /></svg></Task>
    <Task $mr={1}><svg width="24" height="18" viewBox="0 0 24 18"><path d="M4.500 0H24l-4 18H.5z" fill="#3c74d0" /><path d="M7.500 3.500l5.500 5-7.500 5.500M12.500 14h6" fill="none" stroke="#fff" strokeWidth="2" /></svg></Task>
    <Task $mr={1} $run><svg width="22" height="22" viewBox="0 0 22 22"><circle cx="11" cy="11" r="11" fill="#dd4b3e" /><path d="M1.500 5.500L6.500 13.500 11 16l-1 6A11 11 0 0 1 1.500 5.500z" fill="#1ba160" /><path d="M11 6h9.800A11 11 0 0 1 10 22l5.500-8.500z" fill="#ffcd42" /><circle cx="11" cy="11" r="5" fill="#fff" /><circle cx="11" cy="11" r="4" fill="#4a8af4" /></svg></Task>
    <Task $mr={1} $run $multi><svg width="23" height="19" viewBox="0 0 23 19"><path d="M.5.5h22v18H.5z" fill="#050505" stroke="#999" /><path d="M1 1h21v3H1z" fill="#cfcfcf" /><text x="2.500" y="10" fontFamily="Liberation Mono" fontWeight="bold" fontSize="6" fill="#eee">C:\_</text></svg></Task>
    <Task $mr={1} $run><svg width="24" height="24" viewBox="0 0 24 24"><circle cx="12" cy="12" r="12" fill="#3d3d3d" /><g fill="none" stroke="#b0b0b0" strokeWidth=".9"><path d="M3 5c4 6 11 9 20 7M1.500 7.500c4 6 12 9 21.500 7.500M.5 10.500c4 6 12 8.500 21.500 8M.5 14c4 5 11 7.500 19.500 7.500M2 18c4 3.500 8 5 12 5.500M5 3.500c4 6 10 8 18 6.500M7.500 2c4 5 8 7 14.500 5.500M11 .8c3 3 5 4.500 9 4.200" /></g></svg></Task>
    <Task $mr={1} $run><svg width="22" height="22" viewBox="0 0 22 22"><path d="M2 0h18v22H2z" fill="#8f211b" /><path d="M3 3l6 3-1 2-4-2zM19 3l-6 3 1 2 4-2zM8 10h6l-1 4H9z" fill="#1c0d0a" /><path d="M2 13l5-1 3 2h2l3-2 5 1v3l-3 5H5l-3-5z" fill="#eadfca" /><path d="M7 17.500h8M0 14h6M16 14h6M1 17l4-1M21 17l-4-1" stroke="#271410" strokeWidth="1.300" /><path d="M3 1l5 2M19 1l-5 2M9.500 3v5M12.500 3v5M4 8l3 2M18 8l-3 2" stroke="#e6a38a" /></svg></Task>
    <Task $mr={1} $run><svg width="22" height="24" viewBox="0 0 22 24"><path d="M3 0v24M0 19.500h22" stroke="#000" strokeWidth="2" /><path d="M12 4v9M7 13.500h10" stroke="#f516e8" strokeWidth="2" /><path d="M1 17h5v5H1z" fill="#13e413" /></svg></Task>
    <Task $mr={1} $active>
      <svg width="23" height="22" viewBox="0 0 23 22"><path d="M3 0h17q2 0 2 2v17q0 2-2 2H2q-2 0-2-2V3z" fill="#55a754" /><path d="M3 2h17v16H2V3z" fill="#d8eed2" /><path d="M4 4h4l3 5 4-5h2l-5 6 4 6h-4l-2-4-4 4H4l4.500-6z" fill="#2c7f36" /><path d="M13 11h8l2 9-7 1z" fill="#fff" stroke="#8dba8a" /><path d="M15 14l6-1M16 17l6-1" stroke="#62a362" /></svg>
    </Task>
    <Task $mr={1} $run><svg width="22" height="22" viewBox="0 0 22 22" fill="none" strokeWidth="6.500"><path d="M3.500 8A8 8 0 0 1 15 4" stroke="#2f86ea" /><path d="M14 3.600A8 8 0 0 1 18.500 13.500" stroke="#35a845" /><path d="M19 12A8 8 0 0 1 8.500 18.500" stroke="#fcc30b" /><path d="M9 18.800A8 8 0 0 1 3.500 7.500" stroke="#ea3a2d" /></svg></Task>
    <Tray>
      <svg width="12" height="7" viewBox="0 0 12 7"><path d="M.5 6.500L6 1l5.500 5.500" fill="none" stroke="#fff" strokeWidth="1.300" /></svg>
      <svg width="17" height="14" viewBox="0 0 17 14" fill="none" stroke="#fff"><path d="M4.500 1.500h11v8H4M10 9.500v3M6 13h8M.5.500h4v4h-4zM2.500 4.500v8M1 12.500h3" /></svg>
      <svg width="17" height="15" viewBox="0 0 17 15"><path d="M.5 4.500h2L6.500.8v12L2.500 9h-2z" fill="none" stroke="#fff" /><circle cx="11.500" cy="10" r="4.500" fill="#d8242c" /><path d="M9.500 8l4 4M13.500 8l-4 4" stroke="#fff" strokeWidth="1.200" /></svg>
      <svg width="16" height="16" viewBox="0 0 16 16" fill="none" stroke="#fff"><path d="M.5.5h15v11h-5l-2.500 3v-3H.5zM3 3.500h10M3 6h10M3 8.500h7" /></svg>
      <Han>中</Han><Ime>ㄅ</Ime>
      <Clock><span>上午 11:58</span><span>2016/11/18</span></Clock>
      <Edge />
    </Tray>
  </Taskbar>
);

export default function App() {
  return (
    <Window>
      <Global />
      <TitleArea />
      <TabArea />
      <RibbonArea />
      <FormulaBar>
        <NameBox><span>G2</span><Down w={7} c="#333" /></NameBox>
        <FxBox><Knob /><em>f<small>x</small></em></FxBox>
        <Input />
        <Expand><svg width="8" height="6" viewBox="0 0 8 6"><path d="M0 1l4 4 4-4" fill="none" stroke="#444" strokeWidth="2" /></svg></Expand>
      </FormulaBar>
      <SheetArea />
      <BottomArea />
      <TaskArea />
    </Window>
  );
}
